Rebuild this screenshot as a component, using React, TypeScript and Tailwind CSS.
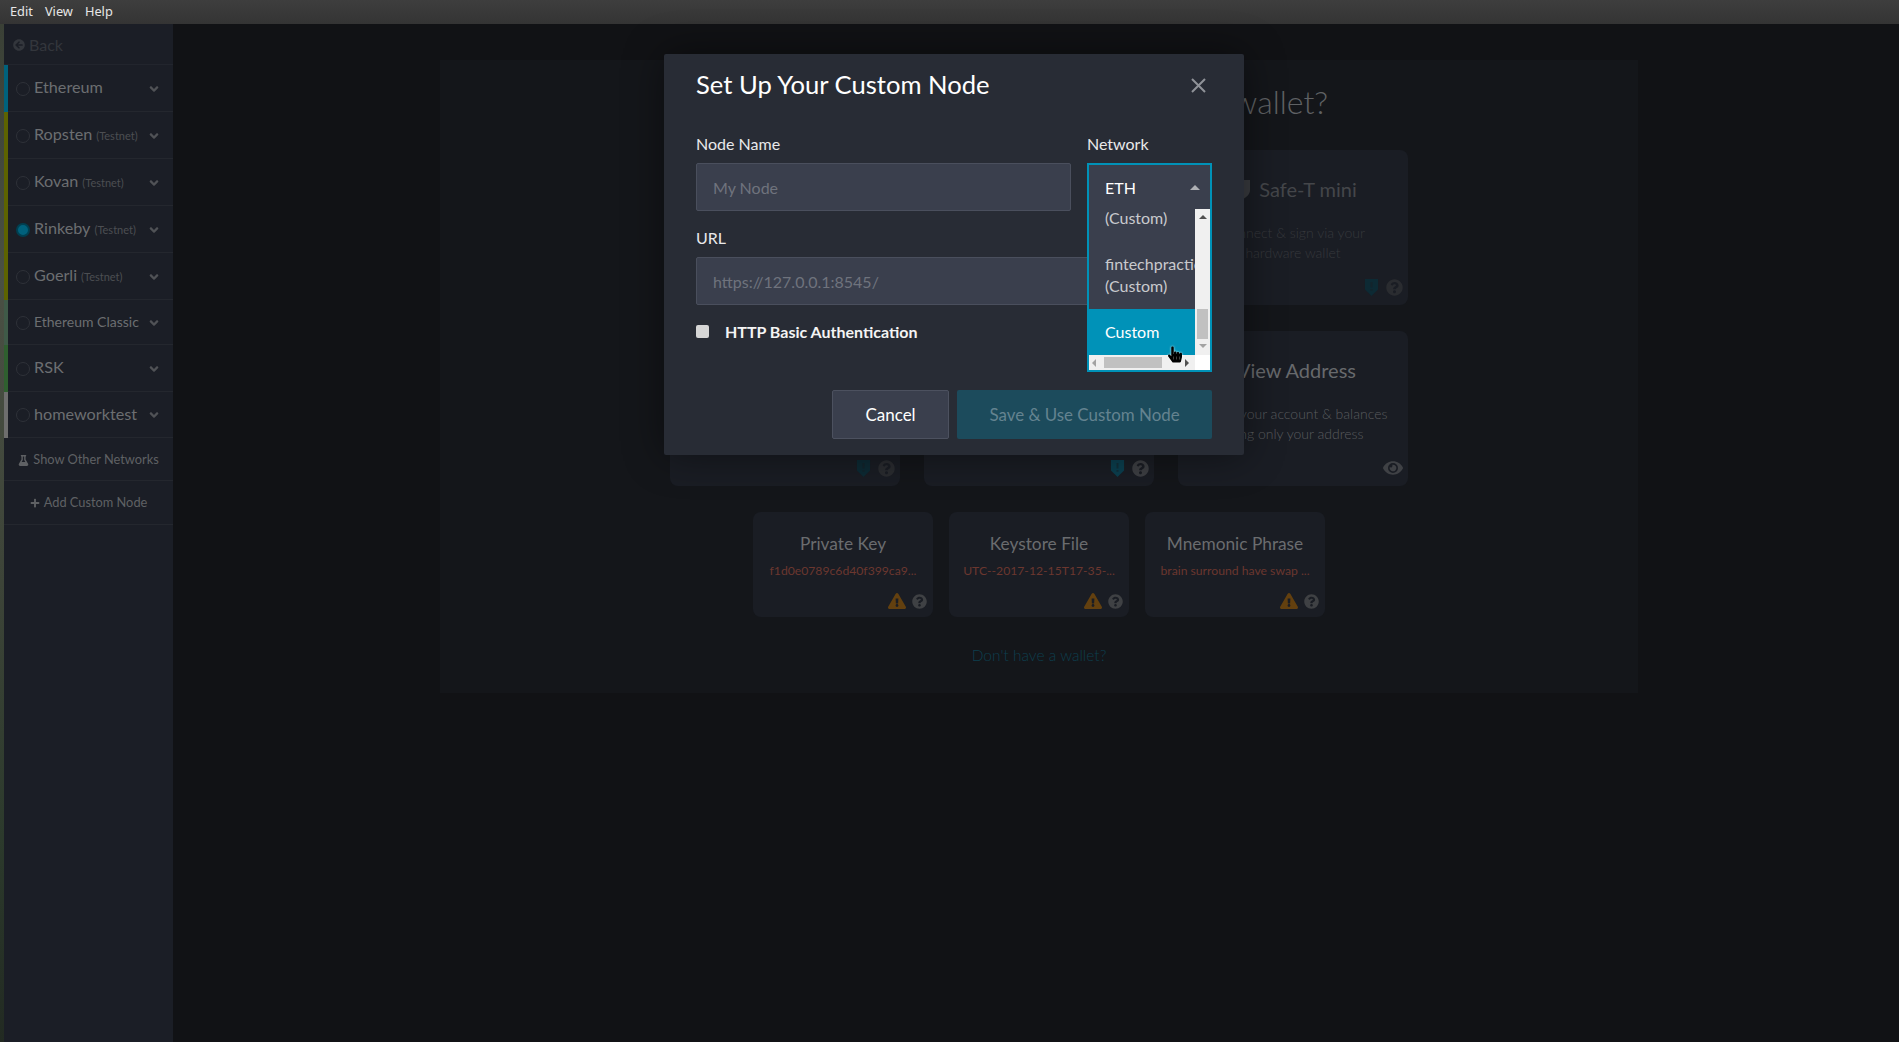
import { FaAngleDown, FaArrowCircleLeft, FaExclamationTriangle, FaEye, FaFlask, FaHandPointer, FaPlus, FaQuestionCircle } from 'react-icons/fa';

const networks = [
  { name: 'Ethereum', stripe: 'border-[#00627c]', height: 'h-[47px]' },
  { name: 'Ropsten', testnet: true, stripe: 'border-[#5d6300]', height: 'h-[47px]' },
  { name: 'Kovan', testnet: true, stripe: 'border-[#5d6300]', height: 'h-[47px]' },
  { name: 'Rinkeby', testnet: true, stripe: 'border-[#5d6300]', selected: true, height: 'h-[47px]' },
  { name: 'Goerli', testnet: true, stripe: 'border-[#5d6300]', height: 'h-[47px]' },
  { name: 'Ethereum Classic', small: true, stripe: 'border-[#3f5a48]', height: 'h-[45px]' },
  { name: 'RSK', stripe: 'border-[#2f5f2f]', height: 'h-[47px]' },
  { name: 'homeworktest', stripe: 'border-[#6e6e6e]', height: 'h-[46px]' },
];

function Shield({ className }: { className: string }) {
  return (
    <svg viewBox="0 0 16 18" className={className}>
      <path d="M1 0h14v11l-7 7-7-7z" fill="currentColor" />
      <path d="M7 3h2v6H7zM7 10.5h2v2H7z" fill="#1a1d24" opacity="0.5" />
    </svg>
  );
}

function WalletCard({ title, lines, dim, shieldColor, eye, logo }: { title: string; lines: string[]; dim?: boolean; shieldColor?: string; eye?: boolean; logo?: boolean }) {
  return (
    <div className="w-[230px] h-[155px] rounded-[8px] bg-[#1a1d24] flex flex-col items-center pt-[26px] pb-[8px] pl-[12px] pr-[5px]">
      <div className={`flex items-center gap-[9px] text-[20px] leading-[26px] ${dim ? 'text-[#44464a]' : 'text-[#67696c]'}`}>
        {logo && (
          <svg viewBox="0 0 14 20" className="w-[14px] h-[20px] text-[#3a3c40]">
            <path d="M0 1h14v10c0 4-3 7-7 9-4-2-7-5-7-9z" fill="currentColor" />
          </svg>
        )}
        {title}
      </div>
      <div className={`mt-[21px] pr-[7px] text-[14px] leading-[20px] text-center font-light ${dim ? 'text-[#36383c]' : 'text-[#595b5e]'}`}>
        {lines.map(l => (
          <div key={l} className="whitespace-nowrap">{l}</div>
        ))}
      </div>
      <div className="mt-auto self-end flex items-center gap-[7px] h-[18px] mb-[1px]">
        {eye ? (
          <FaEye className="w-[20px] h-[20px] text-[#3f4145]" />
        ) : (
          <>
            <Shield className={`w-[15px] h-[17px] ${shieldColor}`} />
            <FaQuestionCircle className={`w-[17px] h-[17px] ${dim ? 'text-[#2a2c30]' : 'text-[#3d3f43]'}`} />
          </>
        )}
      </div>
    </div>
  );
}

function KeyCard({ title, sub }: { title: string; sub: string }) {
  return (
    <div className="w-[180px] h-[105px] rounded-[8px] bg-[#1a1d24] flex flex-col items-center pt-[20px] pb-[8px] px-[7px]">
      <div className="text-[17.3px] leading-[24px] text-[#6a6c6f]">{title}</div>
      <div className="mt-[6px] text-[12.2px] leading-[18px] text-[#6b372f] whitespace-nowrap">{sub}</div>
      <div className="mt-auto self-end -mr-px flex items-center gap-[6px]">
        <FaExclamationTriangle className="w-[18px] h-[16px] text-[#63400f]" />
        <FaQuestionCircle className="w-[15px] h-[15px] text-[#3f4144]" />
      </div>
    </div>
  );
}

function NetworkSelect() {
  return (
    <div className="absolute left-[423px] top-[109px] w-[125px] h-[209px] border-2 border-[#0092b8] bg-white flex flex-col text-[16px] overflow-hidden z-10">
      <div className="h-[44px] shrink-0 bg-[#3a3f4d] flex items-center justify-between pl-[16px] pr-[10px] text-white">
        <span className="pt-px">ETH</span>
        <span className="w-0 h-0 border-x-[5px] border-x-transparent border-b-[5px] border-b-[#aeb0b4]" />
      </div>
      <div className="flex h-[146px] shrink-0">
        <div className="w-[106px] shrink-0 bg-[#3a3f4d] text-[#c9cacd] leading-[22px] overflow-hidden">
          <div className="h-[36px] -mt-[2px] pl-[16px]">(Custom)</div>
          <div className="h-[66px] pl-[16px] pt-[10px] whitespace-nowrap">
            fintechpractice
            <br />
            (Custom)
          </div>
          <div className="h-[46px] pl-[16px] py-[12px] bg-[#0092b8] text-white">Custom</div>
        </div>
        <div className="w-[15px] bg-[#f0f0f0] flex flex-col items-center">
          <span className="mt-[6px] w-0 h-0 border-x-[4px] border-x-transparent border-b-[4px] border-b-[#505050]" />
          <span className="mt-[90px] w-[11px] h-[30px] bg-[#c1c1c1]" />
          <span className="mt-[5px] w-0 h-0 border-x-[4px] border-x-transparent border-t-[4px] border-t-[#a3a3a3]" />
        </div>
      </div>
      <div className="flex flex-1">
        <div className="w-[106px] bg-[#f0f0f0] flex items-center px-[3px]">
          <span className="w-0 h-0 border-y-[4px] border-y-transparent border-r-[4px] border-r-[#a3a3a3]" />
          <span className="ml-[8px] w-[58px] h-[11px] bg-[#c1c1c1]" />
          <span className="ml-auto mr-[3px] w-0 h-0 border-y-[4px] border-y-transparent border-l-[4px] border-l-[#505050]" />
        </div>
      </div>
    </div>
  );
}

function CustomNodeModal() {
  return (
    <div className="absolute left-[664px] top-[54px] w-[580px] h-[401px] bg-[#282c35] rounded-[2px] shadow-[0_0_40px_rgba(0,0,0,0.45)] px-[32px] pt-[14px]">
      <div className="flex items-center justify-between h-[32px]">
        <h2 className="text-[25.6px] text-white">Set Up Your Custom Node</h2>
        <svg viewBox="0 0 15 15" className="w-[15px] h-[15px] mr-[6px] mt-[3px] text-[#8f9298]">
          <path d="M1 1l13 13M14 1L1 14" stroke="currentColor" strokeWidth="2" fill="none" />
        </svg>
      </div>
      <div className="mt-[35px] flex gap-[16px]">
        <div className="w-[375px]">
          <label className="block text-[16px] leading-[18px] text-[#e9e9ea] mb-[10px]">Node Name</label>
          <input readOnly placeholder="My Node" className="w-full h-[48px] px-[16px] pt-px text-[16px] bg-[#3a3f4d] border border-[#4a4f5d] rounded-[2px] placeholder:text-[#6f737d] outline-none" />
        </div>
        <div>
          <label className="block text-[16px] leading-[18px] text-[#e9e9ea]">Network</label>
        </div>
      </div>
      <div className="mt-[18px]">
        <label className="block text-[16px] leading-[18px] text-[#e9e9ea] mb-[10px]">URL</label>
        <input readOnly placeholder="https://127.0.0.1:8545/" className="w-full h-[48px] px-[16px] pt-px text-[16px] bg-[#3a3f4d] border border-[#4a4f5d] rounded-[2px] placeholder:text-[#6f737d] outline-none" />
      </div>
      <div className="mt-[17px] flex items-center gap-[16px] h-[20px]">
        <span className="w-[13px] h-[13px] mb-[2px] rounded-[2px] bg-[#d6d6d6]" />
        <span className="text-[16px] font-bold text-[#f4f4f4]">HTTP Basic Authentication</span>
      </div>
      <div className="mt-[48px] flex justify-end gap-[8px]">
        <button className="w-[117px] h-[49px] rounded-[2px] bg-[#3a3f4d] border border-[#4c515f] text-[17px] text-white">Cancel</button>
        <button className="w-[255px] h-[49px] rounded-[2px] bg-[#1c4b5c] text-[16.9px] text-[#648390]">Save &amp; Use Custom Node</button>
      </div>
      <NetworkSelect />
      <FaHandPointer className="absolute left-[504px] top-[292px] z-20 w-[14px] h-[17px] text-black drop-shadow-[0_0_1px_rgba(255,255,255,0.9)]" />
    </div>
  );
}

export default function App() {
  return (
    <div className="relative h-screen w-full overflow-hidden flex flex-col bg-[#111215] font-['Lato',sans-serif]">
      <div className="h-[24px] shrink-0 bg-[linear-gradient(#3e3e3e,#343434)] flex items-center gap-[12px] px-[10px] font-['Noto_Sans',sans-serif] text-[12.8px] text-[#e6e6e6]">
        <span>Edit</span>
        <span>View</span>
        <span>Help</span>
      </div>
      <div className="flex flex-1 min-h-0">
        <div className="w-[4px] shrink-0 bg-[linear-gradient(#3a4036,#4a5044_25%,#3d4438_55%,#2c3a2c_80%,#222a22)]" />
        <aside className="w-[169px] shrink-0 bg-[#1b1e26]">
          <div className="h-[41px] flex items-center gap-[4px] pl-[9px] pt-px border-b border-[#22252d] text-[16px] text-[#33363c]">
            <FaArrowCircleLeft className="w-[12px] h-[12px]" />
            <span>Back</span>
          </div>
          {networks.map(n => (
            <div key={n.name} className={`${n.height} flex items-center pl-[8px] pr-[12px] border-l-4 ${n.stripe} relative`}>
              <span className={`w-[14px] h-[14px] rounded-full shrink-0 ${n.selected ? 'bg-[#00617c] border-2 border-[#003f50]' : 'border border-[#2e3138]'}`} />
              <span className={`ml-[4px] pb-[2px] whitespace-nowrap text-[#6c6e71] ${n.small ? 'text-[14px]' : 'text-[16.2px]'}`}>
                {n.name}
                {n.testnet && <span className="ml-[4px] text-[11px] text-[#4c4e52]">(Testnet)</span>}
              </span>
              <FaAngleDown className="ml-auto w-[14px] h-[14px] text-[#505256]" />
              <span className="absolute left-0 right-0 bottom-0 h-px bg-[#24272e]" />
            </div>
          ))}
          <div className="h-[43px] pt-[2px] flex items-center justify-center gap-[4px] border-b border-[#24272e] text-[12.8px] text-[#5f6164]">
            <FaFlask className="w-[11px] h-[11px]" />
            <span>Show Other Networks</span>
          </div>
          <div className="h-[44px] pt-[1px] flex items-center justify-center gap-[4px] border-b border-[#24272e] text-[12.8px] text-[#5f6164]">
            <FaPlus className="w-[10px] h-[10px]" />
            <span>Add Custom Node</span>
          </div>
        </aside>
        <main className="flex-1 min-w-0 pl-[267px] pt-[36px]">
          <div className="w-[1198px] h-[633px] bg-[#14161a] flex flex-col items-center pt-[20px]">
            <h1 className="text-[32px] leading-[44px] text-[#5f6164] font-light">How would you like to access your wallet?</h1>
            <div className="mt-[26px] grid grid-cols-3 gap-x-[24px] gap-y-[26px]">
              <WalletCard dim title="Ledger" lines={['Connect & sign via your', 'hardware wallet']} shieldColor="text-[#0d2a34]" />
              <WalletCard dim title="TREZOR" lines={['Connect & sign via your', 'hardware wallet']} shieldColor="text-[#0d2a34]" />
              <WalletCard dim logo title="Safe-T mini" lines={['Connect & sign via your', 'hardware wallet']} shieldColor="text-[#0d2a34]" />
              <WalletCard dim title="MetaMask" lines={['Connect & sign via your', 'browser or extension']} shieldColor="text-[#0d2a34]" />
              <WalletCard title="Parity Signer" lines={['Connect & sign via your', 'Parity Signer mobile app']} shieldColor="text-[#0b3f4f]" />
              <WalletCard eye title="View Address" lines={['Check your account & balances', 'using only your address']} />
            </div>
            <div className="mt-[26px] flex gap-[16px]">
              <KeyCard title="Private Key" sub="f1d0e0789c6d40f399ca9..." />
              <KeyCard title="Keystore File" sub="UTC--2017-12-15T17-35-..." />
              <KeyCard title="Mnemonic Phrase" sub="brain surround have swap ..." />
            </div>
            <div className="mt-[27px] text-[15.5px] font-light text-[#0d3f4e]">Don't have a wallet?</div>
          </div>
        </main>
      </div>
      <CustomNodeModal />
    </div>
  );
}
